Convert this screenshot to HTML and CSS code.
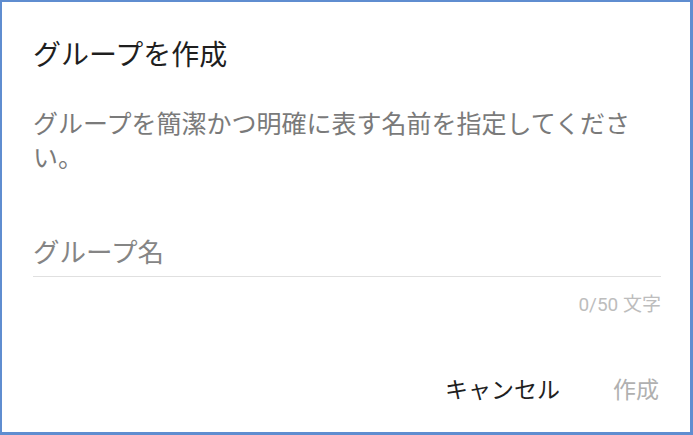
FILE: index.html
```html
<!DOCTYPE html>
<html lang="ja">
<head>
<meta charset="utf-8">
<title>グループを作成</title>
<link rel="stylesheet" href="styles.css">
</head>
<body>
<div class="dialog">
  <h1 class="title">グループを作成</h1>
  <p class="desc">グループを簡潔かつ明確に表す名前を指定してください。</p>
  <div class="field">
    <input class="input" type="text" placeholder="グループ名">
  </div>
  <div class="counter">0/50 文字</div>
  <div class="actions">
    <button class="btn btn-cancel">キャンセル</button>
    <button class="btn btn-create" disabled>作成</button>
  </div>
</div>
</body>
</html>
```

FILE: styles.css
```css
html, body {
  margin: 0;
  padding: 0;
  background: #ffffff;
}
body {
  font-family: "Noto Sans CJK JP", "Noto Sans", sans-serif;
}
.dialog {
  box-sizing: border-box;
  width: 693px;
  height: 435px;
  border-style: solid;
  border-color: #5f8dd0;
  border-width: 2px 3px 3px 2px;
  padding: 33px 29px 0 31px;
  display: flex;
  flex-direction: column;
  background: #fff;
}
.title {
  margin: 0;
  font-size: 28px;
  font-weight: 400;
  letter-spacing: 0;
  line-height: 36px;
  color: #1f1f1f;
}
.desc {
  margin: 34px 0 0 0;
  font-size: 25px;
  line-height: 34px;
  color: #7a7a7a;
}
.field {
  margin-top: 61px;
  border-bottom: 1px solid #e0e0e0;
  padding-bottom: 8px;
}
.input {
  display: block;
  width: 100%;
  box-sizing: border-box;
  border: none;
  outline: none;
  padding: 0;
  margin: 0;
  background: transparent;
  font-family: "Noto Sans CJK JP", sans-serif;
  font-size: 26.5px;
  line-height: 34px;
  height: 34px;
  color: #212121;
}
.input::placeholder {
  color: #858585;
}
.counter {
  margin-top: 16px;
  text-align: right;
  font-family: "Roboto", "Noto Sans CJK JP", sans-serif;
  font-size: 19px;
  line-height: 24px;
  color: #bdbdbd;
}
.actions {
  margin-top: 56px;
  margin-right: 2px;
  display: flex;
  justify-content: flex-end;
  gap: 53px;
}
.btn {
  border: none;
  background: transparent;
  padding: 0;
  margin: 0;
  font-family: "Noto Sans CJK JP", sans-serif;
  font-size: 23px;
  line-height: 30px;
  cursor: pointer;
}
.btn-cancel {
  color: #1f1f1f;
}
.btn-create {
  color: #b0b0b0;
}
```
